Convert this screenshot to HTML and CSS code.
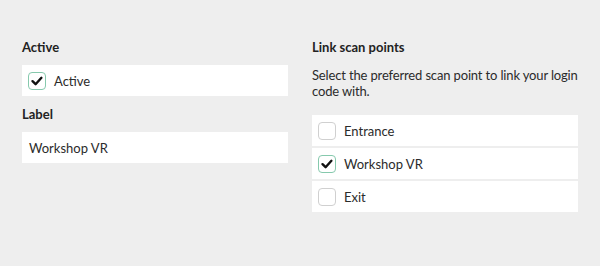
FILE: index.html
```html
<!DOCTYPE html>
<html lang="en">
<head>
  <meta charset="UTF-8" />
  <meta name="viewport" content="width=device-width, initial-scale=1.0"/>
  <title>Scan point settings</title>
  <link rel="stylesheet" href="styles.css">
</head>
<body>
  <div class="form">
    <div class="column">
      <div class="field">
        <h4>Active</h4>
        <label class="box option">
          <span class="check checked">
            <svg viewBox="0 0 18 18"><path d="M4.5 9.2 L7.6 12.2 L13.4 5.8" /></svg>
          </span>
          Active
        </label>
      </div>
      <div class="field">
        <h4>Label</h4>
        <div class="box text">Workshop VR</div>
      </div>
    </div>

    <div class="column">
      <div class="field">
        <h4>Link scan points</h4>
        <p class="hint">Select the preferred scan point to link your login code with.</p>
        <div class="list">
          <label class="box option">
            <span class="check"></span>
            Entrance
          </label>
          <label class="box option">
            <span class="check checked">
              <svg viewBox="0 0 18 18"><path d="M4.5 9.2 L7.6 12.2 L13.4 5.8" /></svg>
            </span>
            Workshop VR
          </label>
          <label class="box option">
            <span class="check"></span>
            Exit
          </label>
        </div>
      </div>
    </div>
  </div>
</body>
</html>
```

FILE: styles.css
```css
body {
  margin: 0;
  padding: 39px 22px;
  background-color: #eeeeee;
  font-family: "Source Sans Pro", Lato, "Noto Sans", sans-serif;
  font-size: 13px;
  line-height: 16px;
  color: #2b2b2b;
}
.form {
  display: grid;
  grid-template-columns: 1fr 1fr;
  column-gap: 24px;
}
.column {
  display: flex;
  flex-direction: column;
  gap: 10px;
}
h4 {
  margin: 0 0 10px;
  font-size: 13px;
  font-weight: bold;
  color: #222;
}
.hint {
  margin: 12px 0 16px;
  font-size: 13px;
  line-height: 16px;
  letter-spacing: -0.15px;
}
.box {
  background-color: #fff;
  height: 31px;
  box-sizing: border-box;
}
.text {
  display: flex;
  align-items: center;
  padding: 0 7px;
}
.option {
  display: flex;
  align-items: center;
  gap: 8px;
  padding: 0 6px;
}
.list {
  display: flex;
  flex-direction: column;
  gap: 2px;
}
.check {
  width: 18px;
  height: 18px;
  box-sizing: border-box;
  border: 1.5px solid #d0d0d0;
  border-radius: 4px;
  display: flex;
  align-items: center;
  justify-content: center;
}
.check.checked {
  border-color: #86c9ad;
}
.check svg {
  width: 18px;
  height: 18px;
  flex: none;
}
.check path {
  fill: none;
  stroke: #111;
  stroke-width: 2.4;
  stroke-linecap: round;
  stroke-linejoin: round;
}
```
